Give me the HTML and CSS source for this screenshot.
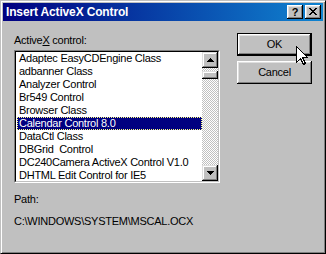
FILE: index.html
```html
<!DOCTYPE html>
<html>
<head>
<meta charset="utf-8">
<link rel="stylesheet" href="styles.css">
</head>
<body>
<div class="window">
  <div class="titlebar">
    <span class="title">Insert ActiveX Control</span>
    <div class="tbtns">
      <div class="tbtn help">?</div>
      <div class="tbtn close">
        <svg width="8" height="7" viewBox="0 0 8 7" shape-rendering="crispEdges">
          <path d="M0 0h2v1h-2zM6 0h2v1h-2zM1 1h2v1h-2zM5 1h2v1h-2zM2 2h4v1h-4zM3 3h2v1h-2zM2 4h4v1h-4zM1 5h2v1h-2zM5 5h2v1h-2zM0 6h2v1h-2zM6 6h2v1h-2z" fill="#000"/>
        </svg>
      </div>
    </div>
  </div>
  <div class="content">
    <div class="left">
      <div class="label">Active<u>X</u> control:</div>
      <div class="listbox">
        <div class="listinner">
          <div class="items">
            <div class="item">Adaptec EasyCDEngine Class</div>
            <div class="item">adbanner Class</div>
            <div class="item">Analyzer Control</div>
            <div class="item">Br549 Control</div>
            <div class="item">Browser Class</div>
            <div class="item selected">Calendar Control 8.0</div>
            <div class="item">DataCtl Class</div>
            <div class="item">DBGrid&nbsp; Control</div>
            <div class="item">DC240Camera ActiveX Control V1.0</div>
            <div class="item">DHTML Edit Control for IE5</div>
          </div>
          <div class="scrollbar">
            <div class="sbtn">
              <svg width="7" height="4" viewBox="0 0 7 4" shape-rendering="crispEdges"><path d="M3 0h1v1h-1zM2 1h3v1h-3zM1 2h5v1h-5zM0 3h7v1h-7z" fill="#000"/></svg>
            </div>
            <div class="track"><div class="thumb"></div></div>
            <div class="sbtn">
              <svg width="7" height="4" viewBox="0 0 7 4" shape-rendering="crispEdges"><path d="M0 0h7v1h-7zM1 1h5v1h-5zM2 2h3v1h-3zM3 3h1v1h-1z" fill="#000"/></svg>
            </div>
          </div>
        </div>
      </div>
      <div class="pathlabel">Path:</div>
      <div class="pathtext">C:\WINDOWS\SYSTEM\MSCAL.OCX</div>
    </div>
    <div class="right">
      <div class="default"><div class="btn">OK</div></div>
      <div class="btn cancel">Cancel</div>
    </div>
  </div>
  <svg class="cursor" width="13" height="20" viewBox="0 0 13 20" shape-rendering="crispEdges">
    <polygon points="0.5,0.5 0.5,16.5 4.5,12.5 7.5,18.5 9.5,17.5 6.5,11.5 11.5,11.5" fill="#fff" stroke="#000" stroke-width="1" stroke-linejoin="miter"/>
  </svg>
</div>
</body>
</html>
```
FILE: styles.css
```css
* { box-sizing: border-box; }
html, body { margin: 0; padding: 0; background: #c0c0c0; }
body {
  font-family: "Liberation Sans", Arial, sans-serif;
  font-size: 11px;
  line-height: 13px;
  letter-spacing: -0.25px;
  color: #000;
}
.window {
  position: relative;
  width: 326px;
  height: 254px;
  background: #c0c0c0;
  border: 1px solid;
  border-color: #c0c0c0 #000 #000 #c0c0c0;
  box-shadow: inset 1px 1px #fff, inset -1px -1px #808080;
  padding: 2px;
  overflow: hidden;
}
.titlebar {
  height: 18px;
  display: flex;
  align-items: center;
  justify-content: space-between;
  background: linear-gradient(to right, #000080, #1084d0);
  padding: 0 2px 0 3px;
}
.title {
  color: #fff;
  font-weight: bold;
  font-size: 12px;
  letter-spacing: -0.15px;
}
.tbtns { display: flex; gap: 2px; }
.tbtn {
  width: 16px;
  height: 14px;
  background: #c0c0c0;
  box-shadow: inset -1px -1px #000, inset 1px 1px #fff, inset -2px -2px #808080, inset 2px 2px #dfdfdf;
  display: flex;
  align-items: center;
  justify-content: center;
}
.help {
  font-weight: bold;
  font-size: 11px;
  line-height: 12px;
  letter-spacing: 0;
  padding-bottom: 1px;
}
.close svg { display: block; margin-top: -1px; }
.content {
  display: grid;
  grid-template-columns: 206px 75px;
  column-gap: 17px;
  padding: 12px 0 0 11px;
}
.left { display: flex; flex-direction: column; }
.label { margin-top: 1px; height: 13px; margin-bottom: 3px; }
.label u { text-decoration: underline; text-underline-offset: 1px; }
.listbox {
  height: 133px;
  border: 1px solid;
  border-color: #808080 #fff #fff #808080;
}
.listinner {
  height: 100%;
  border: 1px solid;
  border-color: #000 #c0c0c0 #c0c0c0 #000;
  background: #fff;
  display: flex;
  overflow: hidden;
}
.items { flex: 1; overflow: hidden; }
.item {
  height: 13px;
  padding-left: 2px;
  margin-left: 1px;
  white-space: nowrap;
  overflow: hidden;
}
.item.selected {
  background: #000080;
  color: #fff;
  outline: 1px dotted #ffff7f;
  outline-offset: -1px;
}
.scrollbar {
  width: 16px;
  display: flex;
  flex-direction: column;
}
.sbtn {
  width: 16px;
  height: 16px;
  flex: none;
  background: #c0c0c0;
  box-shadow: inset -1px -1px #000, inset 1px 1px #dfdfdf, inset -2px -2px #808080, inset 2px 2px #fff;
  display: flex;
  align-items: center;
  justify-content: center;
}
.sbtn svg { display: block; }
.track {
  flex: 1;
  background-image: conic-gradient(#fff 25%, #c0c0c0 0 50%, #fff 0 75%, #c0c0c0 0);
  background-size: 2px 2px;
  padding-top: 3px;
}
.thumb {
  height: 8px;
  background: #c0c0c0;
  box-shadow: inset -1px -1px #000, inset 1px 1px #dfdfdf, inset -2px -2px #808080, inset 2px 2px #fff;
}
.pathlabel { margin-top: 10px; height: 13px; }
.pathtext { margin-top: 9px; height: 13px; white-space: nowrap; }
.right { display: flex; flex-direction: column; gap: 5px; }
.default {
  width: 75px;
  height: 23px;
  border: 1px solid #000;
}
.btn {
  width: 75px;
  height: 23px;
  background: #c0c0c0;
  box-shadow: inset -1px -1px #000, inset 1px 1px #fff, inset -2px -2px #808080, inset 2px 2px #dfdfdf;
  display: flex;
  align-items: center;
  justify-content: center;
}
.default .btn { width: 73px; height: 21px; }
.cursor {
  position: absolute;
  left: 295px;
  top: 45px;
}
```
